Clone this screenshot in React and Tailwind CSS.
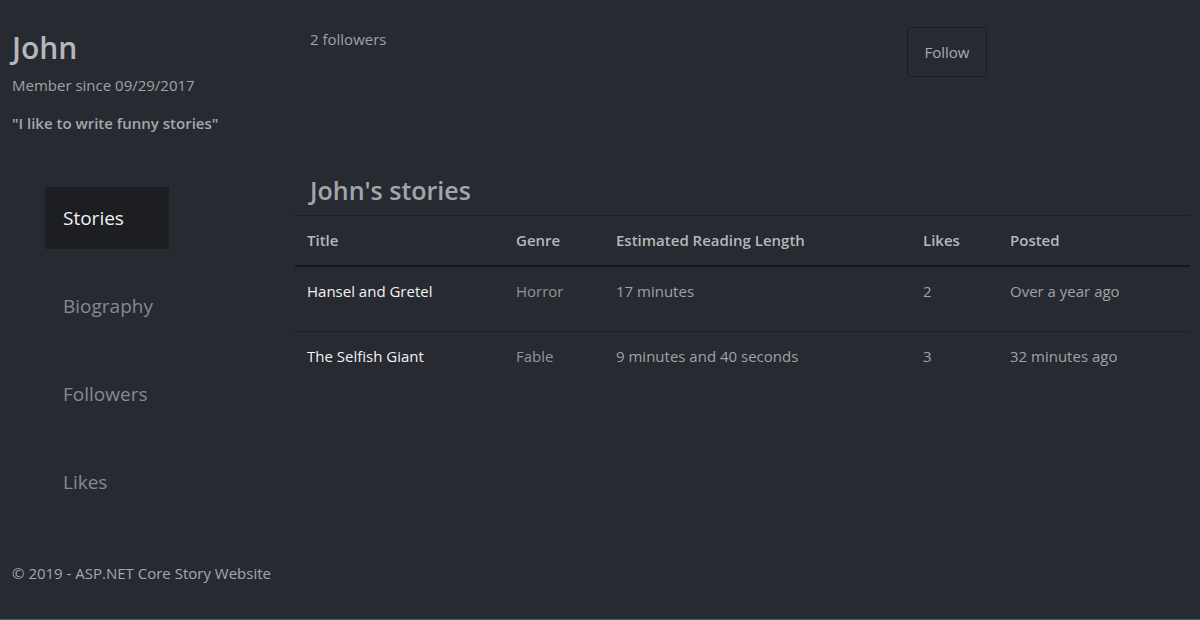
import React from "react";

const font = { fontFamily: '"Open Sans", "Noto Sans", "Liberation Sans", sans-serif' };

const rows = [
  { title: "Hansel and Gretel", genre: "Horror", len: "17 minutes", likes: "2", posted: "Over a year ago" },
  { title: "The Selfish Giant", genre: "Fable", len: "9 minutes and 40 seconds", likes: "3", posted: "32 minutes ago" },
];

function NavItem({ label, active }) {
  if (active) {
    return (
      <div className="w-[124px] h-[62px] bg-[#1c1e22] flex items-center pl-[18px] text-[19px] text-[#f2f2f2]">
        {label}
      </div>
    );
  }
  return (
    <div className="w-[142px] h-[62px] border-l border-r border-[#2d3036] flex items-center pl-[17px] text-[19px] text-[#858a91]">
      {label}
    </div>
  );
}

export default function App() {
  return (
    <div className="w-[1200px] h-[620px] bg-[#272a30] overflow-hidden flex flex-col" style={font}>
      <div className="flex h-[542px]">
        <div className="w-[295px] shrink-0 flex flex-col">
          <div className="pl-[12px] pt-[28px]">
            <div className="text-[30px] leading-[40px] text-[#b4b8bd] font-semibold">John</div>
            <div className="text-[15px] leading-[20px] mt-[7px] text-[#9ea3a9]">Member since 09/29/2017</div>
            <div className="text-[15px] leading-[20px] mt-[18px] text-[#a4a8ad] font-semibold">"I like to write funny stories"</div>
          </div>
          <div className="pl-[45px] mt-[54px] flex flex-col gap-[26px]">
            <NavItem label="Stories" active />
            <NavItem label="Biography" />
            <NavItem label="Followers" />
            <NavItem label="Likes" />
          </div>
        </div>
        <div className="flex-1 flex flex-col pr-[10px]">
          <div className="flex items-start h-[160px]">
            <div className="pl-[15px] pt-[28px] text-[15px] text-[#9ea3a9] w-[612px]">2 followers</div>
            <button className="mt-[27px] w-[80px] h-[50px] border border-[#1b1d21] rounded-[4px] text-[15px] text-[#a8acb1]">
              Follow
            </button>
          </div>
          <div className="pl-[15px] h-[55px] pt-[6px] flex items-center text-[25px] font-semibold text-[#a2a6ab]">John's stories</div>
          <table className="w-full border-collapse text-[15px] text-left">
            <thead>
              <tr className="border-t border-[#1e2024] border-b-2 border-b-[#17181b]">
                <th className="h-[50px] pl-[12px] w-[209px] font-semibold text-[#b4b8bd]">Title</th>
                <th className="pl-[12px] w-[100px] font-semibold text-[#b4b8bd]">Genre</th>
                <th className="pl-[12px] w-[307px] font-semibold text-[#b4b8bd]">Estimated Reading Length</th>
                <th className="pl-[12px] w-[87px] font-semibold text-[#b4b8bd]">Likes</th>
                <th className="pl-[12px] font-semibold text-[#b4b8bd]">Posted</th>
              </tr>
            </thead>
            <tbody>
              {rows.map((r, i) => (
                <tr key={i} className={i === 0 ? "border-b border-[#1e2024]" : ""}>
                  <td className="h-[66px] align-top pt-[13px] pl-[12px] text-[#f2f2f2]">{r.title}</td>
                  <td className="align-top pt-[13px] pl-[12px] text-[#8f949a]">{r.genre}</td>
                  <td className="align-top pt-[13px] pl-[12px] text-[#9ea3a9]">{r.len}</td>
                  <td className="align-top pt-[13px] pl-[12px] text-[#9ea3a9]">{r.likes}</td>
                  <td className="align-top pt-[13px] pl-[12px] text-[#9ea3a9]">{r.posted}</td>
                </tr>
              ))}
            </tbody>
          </table>
        </div>
      </div>
      <div className="flex-1 border-t border-[#2a2d33] pl-[12px] pt-[20px] text-[15px] leading-[20px] text-[#a4a8ad]">
        © 2019 - ASP.NET Core Story Website
      </div>
      <div className="h-[1px] bg-[#23698c]"></div>
    </div>
  );
}
